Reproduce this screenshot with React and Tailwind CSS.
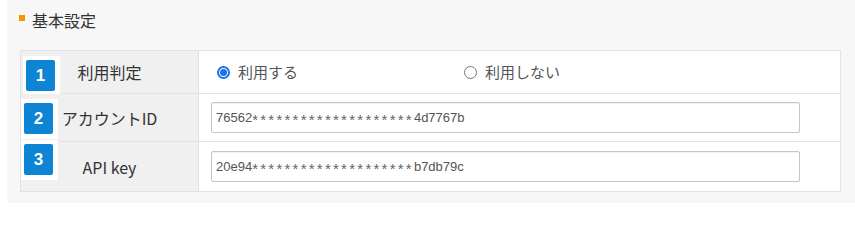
import React from 'react'

const jp = { fontFamily: '"Noto Sans CJK JP", "Liberation Sans", sans-serif' }
const latin = { fontFamily: '"Liberation Sans", "Noto Sans CJK JP", sans-serif' }

const Badge = ({ n, pos }) => (
  <div className={`absolute bg-white w-[37px] h-[40px] ${pos}`}>
    <div className='absolute left-[3px] top-[4px] w-[29px] h-[31px] rounded-[2px] bg-[#0d84d4] flex items-center justify-center text-white text-[17px] font-bold' style={latin}>
      {n}
    </div>
  </div>
)

const Radio = ({ checked, label }) => (
  <label className='flex items-center gap-[8px] w-[247px] text-[15px] text-[#555]' style={jp}>
    {checked ?
      <span className='w-[13px] h-[13px] rounded-full border-2 border-[#1a73e8] flex items-center justify-center'>
        <span className='w-[7px] h-[7px] rounded-full bg-[#1a73e8]'></span>
      </span>
      : <span className='w-[13px] h-[13px] rounded-full border border-[#767676] bg-white'></span>
    }
    <span>{label}</span>
  </label>
)

const TextBox = ({ head, tail }) => (
  <div className='w-[589px] h-[31px] border border-[#c6c6c6] rounded-[2px] bg-white flex items-center px-[4px] text-[13px] text-[#555] shadow-[inset_0_1px_1px_rgba(0,0,0,0.06)]' style={latin}>
    <span>{head}</span>
    <span className='text-[15px] tracking-[2.25px] relative top-[3px] text-[#666]'>{'*'.repeat(20)}</span>
    <span>{tail}</span>
  </div>
)

const App = () => {
  const rows = [
    { n: 1, label: '利用判定', h: 'h-[43px]', pos: 'left-[2px] top-[5px]', content: (
      <div className='flex items-center pl-[18px]'>
        <Radio checked label='利用する' />
        <Radio label='利用しない' />
      </div>
    ) },
    { n: 2, label: 'アカウントID', h: 'h-[48px]', pos: 'left-[0px] top-[5px]', content: (
      <div className='pl-[12px]'><TextBox head='76562' tail='4d7767b' /></div>
    ) },
    { n: 3, label: 'API key', h: 'h-[49px]', pos: 'left-[0px] top-[-2px]', content: (
      <div className='pl-[12px]'><TextBox head='20e94' tail='b7db79c' /></div>
    ) },
  ]

  return (
    <div className='w-[855px] h-[207px] bg-white pl-[7px]'>
      <div className='h-[203px] bg-[#f7f7f7] pl-[13px] pr-[14px] pt-[8px]'>
        <div className='flex items-center h-[24px] -ml-[1px]'>
          <span className='w-[6px] h-[6px] bg-[#f39800] mr-[7px] -mt-[4px]'></span>
          <h2 className='text-[16px] text-[#333]' style={jp}>基本設定</h2>
        </div>
        <div className='mt-[18px] border border-[#e2e2e2] bg-white'>
          {rows.map((r, i) => (
            <div key={r.n} className={`flex ${r.h} ${i < rows.length - 1 ? 'border-b border-[#e2e2e2]' : ''}`}>
              <div className='relative w-[178px] shrink-0 bg-[#f0f0f0] border-r border-[#e2e2e2] flex items-center justify-center text-[16px] text-[#333]' style={jp}>
                <Badge n={r.n} pos={r.pos} />
                <span className='relative'>{r.label}</span>
              </div>
              <div className='flex-1 flex items-center'>
                {r.content}
              </div>
            </div>
          ))}
        </div>
      </div>
    </div>
  )
}

export default App
